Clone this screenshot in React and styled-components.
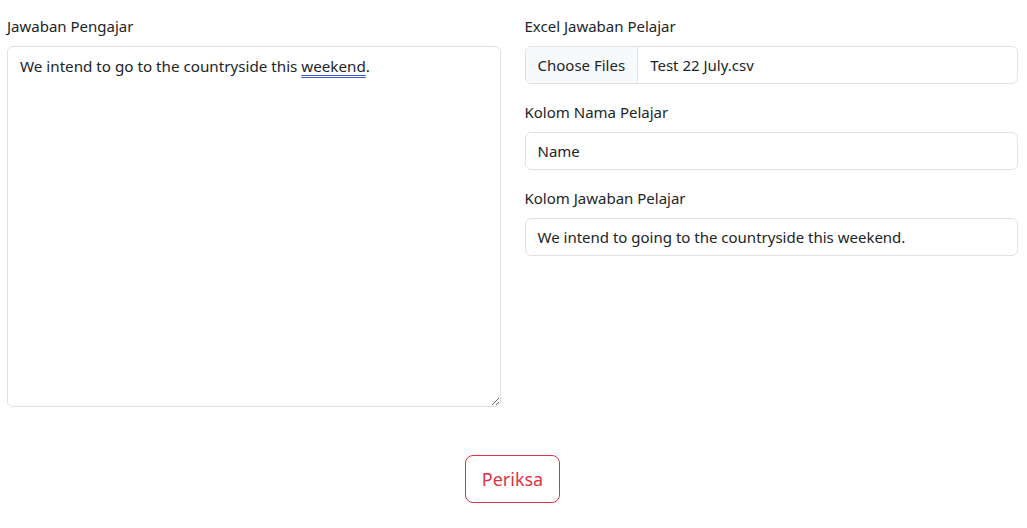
import React from 'react';
import styled, { createGlobalStyle } from 'styled-components';

const GlobalStyle = createGlobalStyle`
	* {
		box-sizing: border-box;
	}
	body {
		margin: 0;
		background: #ffffff;
		color: #212529;
		font-family: 'Noto Sans', 'Open Sans', sans-serif;
		font-size: 15px;
		line-height: 24px;
	}
`;

const Page = styled.form`
	padding: 14px 9px 0 7px;
`;

const Row = styled.div`
	display: grid;
	grid-template-columns: 1fr 1fr;
	column-gap: 24px;
`;

const Column = styled.div`
	display: flex;
	flex-direction: column;
`;

const Field = styled.div`
	display: flex;
	flex-direction: column;
	margin-bottom: ${(p) => (p.$last ? '0' : '16px')};
`;

const Label = styled.label`
	display: block;
	height: 24px;
	margin-bottom: 8px;
`;

const TextArea = styled.div`
	height: 361px;
	padding: 7px 12px;
	border: 1px solid #dee2e6;
	border-radius: 6px;
	overflow: auto;
	resize: vertical;
	background: #fff;
	font-size: 15.2px;
`;

const Misspelled = styled.span`
	text-decoration: underline double #3f55c8;
	text-underline-offset: 3px;
	text-decoration-thickness: 1px;
`;

const Input = styled.div`
	height: 38px;
	display: flex;
	align-items: center;
	border: 1px solid #dee2e6;
	border-radius: 6px;
	background: #fff;
	overflow: hidden;
`;

const InputText = styled.span`
	padding: 0 12px;
`;

const FileButton = styled.span`
	display: flex;
	align-items: center;
	height: 100%;
	padding: 0 12px;
	background: #f8f9fa;
	border-right: 1px solid #dee2e6;
`;

const Actions = styled.div`
	display: flex;
	justify-content: center;
	margin-top: 48px;
`;

const SubmitButton = styled.button`
	height: 48px;
	padding: 0 16px;
	font-family: inherit;
	font-size: 18px;
	color: #dc3545;
	background: transparent;
	border: 1px solid #dc3545;
	border-radius: 8px;
	cursor: pointer;
`;

const App = () => {
	return (
		<>
			<GlobalStyle />
			<Page>
				<Row>
					<Column>
						<Label>Jawaban Pengajar</Label>
						<TextArea role='textbox' aria-multiline='true'>
							We intend to go to the countryside this <Misspelled>weekend</Misspelled>.
						</TextArea>
					</Column>
					<Column>
						<Field>
							<Label>Excel Jawaban Pelajar</Label>
							<Input>
								<FileButton>Choose Files</FileButton>
								<InputText>Test 22 July.csv</InputText>
							</Input>
						</Field>
						<Field>
							<Label>Kolom Nama Pelajar</Label>
							<Input>
								<InputText>Name</InputText>
							</Input>
						</Field>
						<Field $last>
							<Label>Kolom Jawaban Pelajar</Label>
							<Input>
								<InputText>We intend to going to the countryside this weekend.</InputText>
							</Input>
						</Field>
					</Column>
				</Row>
				<Actions>
					<SubmitButton type='button'>Periksa</SubmitButton>
				</Actions>
			</Page>
		</>
	);
};

export default App;
